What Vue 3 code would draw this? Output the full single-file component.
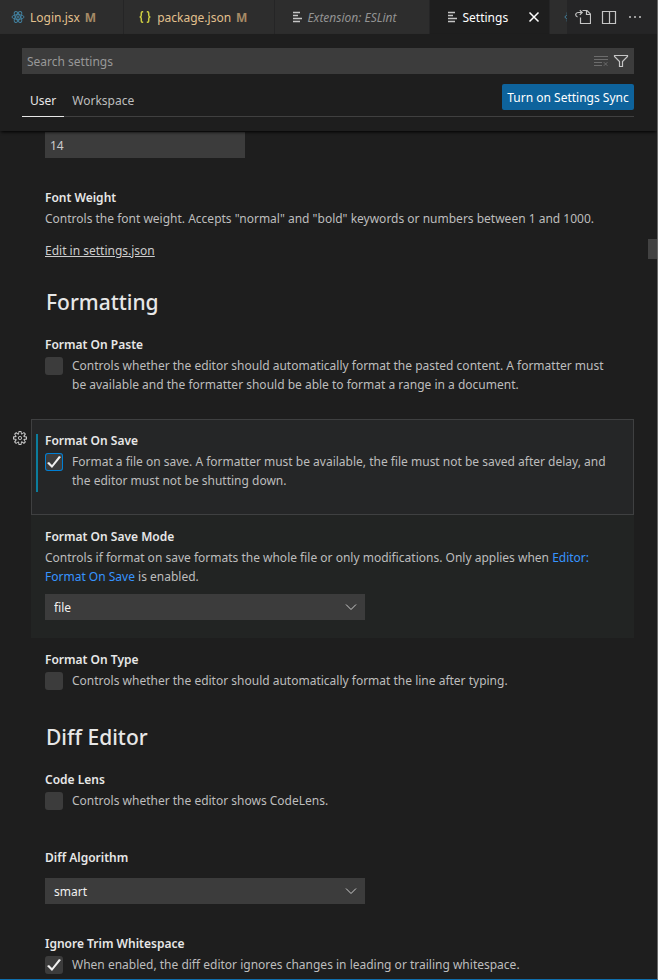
<script setup>
import { ref } from 'vue'

const tabs = [
  { name: 'Login.jsx', icon: 'react', modified: true },
  { name: 'package.json', icon: 'json', modified: true },
  { name: 'Extension: ESLint', icon: 'lines', preview: true },
  { name: 'Settings', icon: 'lines', active: true },
  { name: '', icon: 'react' },
]

const fontSize = ref('14')
const query = ref('')
const formatOnPaste = ref(false)
const formatOnSave = ref(true)
const saveMode = ref('file')
const formatOnType = ref(false)
const codeLens = ref(false)
const algorithm = ref('smart')
const ignoreTrim = ref(true)
</script>

<template>
  <div class="window">
    <header class="tabbar">
      <nav class="tabs" aria-label="Open editors">
        <a
          v-for="(tab, index) in tabs"
          :key="index"
          href="#"
          class="tab"
          :class="{ active: tab.active, preview: tab.preview, modified: tab.modified }"
        >
          <svg v-if="tab.icon === 'react'" class="icon react" viewBox="0 0 16 16" aria-hidden="true">
            <ellipse cx="8" cy="8" rx="6" ry="2.4" />
            <ellipse cx="8" cy="8" rx="6" ry="2.4" transform="rotate(60 8 8)" />
            <ellipse cx="8" cy="8" rx="6" ry="2.4" transform="rotate(120 8 8)" />
            <circle cx="8" cy="8" r="1" />
          </svg>
          <svg v-else-if="tab.icon === 'json'" class="icon json" viewBox="0 0 16 16" aria-hidden="true">
            <path d="M6.2 2.8H5.4Q4.3 2.8 4.3 4V6.3Q4.3 8 2.6 8Q4.3 8 4.3 9.7V12Q4.3 13.2 5.4 13.2H6.2" />
            <path d="M9.8 2.8H10.6Q11.7 2.8 11.7 4V6.3Q11.7 8 13.4 8Q11.7 8 11.7 9.7V12Q11.7 13.2 10.6 13.2H9.8" />
          </svg>
          <svg v-else class="icon lines" viewBox="0 0 16 16" aria-hidden="true">
            <path d="M3 3.5H10M3 6.5H8M3 9.5H12M3 12.5H10" />
          </svg>
          <span v-if="tab.name" class="tab-name">{{ tab.name }}</span>
          <span v-if="tab.modified" class="badge">M</span>
          <svg v-if="tab.active" class="icon close" viewBox="0 0 16 16" aria-hidden="true">
            <path d="M3.5 3.5L12.5 12.5M12.5 3.5L3.5 12.5" />
          </svg>
        </a>
      </nav>
      <div class="actions">
        <button type="button" aria-label="Open Settings (JSON)">
          <svg class="icon" viewBox="0 0 16 16" aria-hidden="true">
            <path d="M7.5 1.5H12L15.5 5V14.5H5.5V8.500" />
            <path d="M11.5 1.5V5.500H15.500" />
            <path d="M2.500 7.800Q.5 7.300 .7 5.500Q1 3.500 3.500 3.500H7M4.800 1.200L7.200 3.500L4.800 5.900" />
          </svg>
        </button>
        <button type="button" aria-label="Split editor">
          <svg class="icon" viewBox="0 0 16 16" aria-hidden="true">
            <path d="M1.5 2.5H14.5V14.5H1.5ZM8.5 2.5V14.5" />
          </svg>
        </button>
        <button type="button" aria-label="More actions">
          <svg class="icon dots" viewBox="0 0 16 16" aria-hidden="true">
            <circle cx="3" cy="8" r="1" /><circle cx="8" cy="8" r="1" /><circle cx="13" cy="8" r="1" />
          </svg>
        </button>
      </div>
    </header>

    <section class="settings-head">
      <div class="search">
        <input v-model="query" type="text" placeholder="Search settings" aria-label="Search settings" />
        <button type="button" class="dim" aria-label="Clear search">
          <svg class="icon" viewBox="0 0 16 16" aria-hidden="true">
            <path d="M1 3.5H15M1 6.5H15M1 9.5H9M1 12.5H9M10.800 9.200L14.400 12.800M14.400 9.200L10.800 12.800" />
          </svg>
        </button>
        <button type="button" aria-label="Filter settings">
          <svg class="icon funnel" viewBox="0 0 16 16" aria-hidden="true">
            <path d="M1.5 2.5H14.5V3.500L9.500 8.500V13.500H6.500V8.500L1.500 3.500Z" />
          </svg>
        </button>
      </div>
      <div class="scope">
        <a href="#" class="scope-tab current">User</a>
        <a href="#" class="scope-tab">Workspace</a>
        <button type="button" class="sync">Turn on Settings Sync</button>
      </div>
    </section>

    <main class="settings">
      <div class="item first">
        <input v-model="fontSize" class="number" type="text" aria-label="Font Size" />
      </div>

      <div class="item">
        <h3>Font Weight</h3>
        <p>Controls the font weight. Accepts "normal" and "bold" keywords or numbers between 1 and 1000.</p>
        <a href="#" class="edit">Edit in settings.json</a>
      </div>

      <h2>Formatting</h2>

      <div class="item">
        <h3>Format On Paste</h3>
        <label class="check">
          <input v-model="formatOnPaste" type="checkbox" />
          <span>Controls whether the editor should automatically format the pasted content. A formatter must be available and the formatter should be able to format a range in a document.</span>
        </label>
      </div>

      <div class="item focused">
        <button type="button" class="gear" aria-label="More actions for Format On Save">
          <svg class="icon" viewBox="0 0 16 16" aria-hidden="true">
            <path fill-rule="evenodd" d="M9.1 4.4L8.6 2H7.4l-.5 2.4-.7.3-2-1.3-.9.8 1.3 2-.2.7-2.4.5v1.2l2.4.5.3.8-1.3 2 .8.8 2-1.3.8.3.4 2.3h1.2l.5-2.4.8-.3 2 1.3.8-.8-1.3-2 .3-.8 2.3-.4V7.4l-2.4-.5-.3-.8 1.3-2-.8-.8-2 1.3-.7-.2zM9.4 1l.5 2.4L12 2.1l2 2-1.4 2.1 2.4.4v2.8l-2.4.5L14 12l-2 2-2.1-1.4-.5 2.4H6.6l-.5-2.4L4 13.9l-2-2 1.400-2.100L1 9.400V6.600l2.400-.5L2.100 4l2-2 2.100 1.400.4-2.400h2.800zm.6 7c0 1.100-.9 2-2 2s-2-.9-2-2 .9-2 2-2 2 .9 2 2zM8 9c.6 0 1-.4 1-1s-.4-1-1-1-1 .4-1 1 .4 1 1 1z" />
          </svg>
        </button>
        <h3>Format On Save</h3>
        <label class="check">
          <input v-model="formatOnSave" type="checkbox" />
          <span>Format a file on save. A formatter must be available, the file must not be saved after delay, and the editor must not be shutting down.</span>
        </label>
      </div>

      <div class="item hovered">
        <h3 id="save-mode">Format On Save Mode</h3>
        <p>Controls if format on save formats the whole file or only modifications. Only applies when <a href="#">Editor: Format On Save</a> is enabled.</p>
        <div class="select">
          <select v-model="saveMode" aria-labelledby="save-mode">
            <option>file</option>
            <option>modifications</option>
          </select>
          <svg class="icon" viewBox="0 0 16 16" aria-hidden="true"><path d="M3 5.500L8 10.500L13 5.500" /></svg>
        </div>
      </div>

      <div class="item">
        <h3>Format On Type</h3>
        <label class="check">
          <input v-model="formatOnType" type="checkbox" />
          <span>Controls whether the editor should automatically format the line after typing.</span>
        </label>
      </div>

      <h2>Diff Editor</h2>

      <div class="item">
        <h3>Code Lens</h3>
        <label class="check">
          <input v-model="codeLens" type="checkbox" />
          <span>Controls whether the editor shows CodeLens.</span>
        </label>
      </div>

      <div class="item bare">
        <h3 id="algorithm">Diff Algorithm</h3>
        <div class="select">
          <select v-model="algorithm" aria-labelledby="algorithm">
            <option>smart</option>
            <option>experimental</option>
          </select>
          <svg class="icon" viewBox="0 0 16 16" aria-hidden="true"><path d="M3 5.500L8 10.500L13 5.500" /></svg>
        </div>
      </div>

      <div class="item">
        <h3>Ignore Trim Whitespace</h3>
        <label class="check">
          <input v-model="ignoreTrim" type="checkbox" />
          <span>When enabled, the diff editor ignores changes in leading or trailing whitespace.</span>
        </label>
      </div>
      <div class="thumb"></div>
    </main>
  </div>
</template>

<style>
body {
  background: #1e1e1e;
}
</style>

<style scoped>
.window {
  box-sizing: border-box;
  display: flex;
  flex-direction: column;
  height: 100vh;
  overflow: hidden;
  border-right: 1px solid #6a6a6a;
  border-bottom: 1px solid #0f6fae;
  background: #1e1e1e;
  color: #bdbdbd;
  font: 12px/19px "Noto Sans", "Open Sans", sans-serif;
}
* {
  box-sizing: border-box;
}
button,
input,
select {
  margin: 0;
  padding: 0;
  border: 0;
  border-radius: 0;
  background: none;
  color: inherit;
  font: inherit;
  outline: none;
}
button {
  display: flex;
  align-items: center;
  justify-content: center;
}
a {
  color: inherit;
  text-decoration: none;
}
.icon {
  display: block;
  flex: none;
  width: 16px;
  height: 16px;
  fill: none;
  stroke: currentColor;
}

.tabbar {
  display: flex;
  flex: none;
  height: 34px;
  background: #252526;
}
.tabs {
  display: flex;
  flex: 1;
  min-width: 0;
  overflow: hidden;
}
.tab {
  display: flex;
  flex: none;
  align-items: center;
  padding: 0 27px 0 13px;
  border-right: 1px solid #252526;
  background: #2d2d2d;
  color: #939393;
  white-space: nowrap;
}
.tab:first-child {
  padding-left: 10px;
}
.tab-name {
  margin-left: 4px;
}
.badge {
  margin-left: 5px;
  color: #a58a66;
  font-weight: 700;
}
.modified {
  color: #e2c08d;
}
.preview {
  padding-right: 33px;
  padding-left: 15px;
  font-style: italic;
}
.preview .tab-name,
.active .tab-name {
  margin-left: 1px;
}
.active {
  padding-right: 7px;
  padding-left: 15px;
  background: #1e1e1e;
  color: #fff;
}
.close {
  margin-left: 18px;
  stroke-width: 1.5;
}
.react {
  color: #42809f;
}
.json {
  color: #cbcb41;
  stroke-width: 1.5;
}
.lines {
  color: #c5c5c5;
  stroke-width: 1.3;
}
.actions {
  display: flex;
  align-items: center;
  gap: 10px;
  padding: 0 14px 0 8px;
  color: #c5c5c5;
}
.actions .icon,
.funnel {
  stroke-width: 1.2;
}
.dots {
  fill: currentColor;
  stroke: none;
}

.settings-head {
  z-index: 1;
  flex: none;
  padding: 14px 23px 14px 22px;
  box-shadow: 0 2px 3px -1px #000;
}
.search {
  display: flex;
  align-items: center;
  gap: 4px;
  height: 26px;
  padding: 0 5px;
  background: #3c3c3c;
  color: #c5c5c5;
}
.search input {
  flex: 1;
  min-width: 0;
}
.search input::placeholder {
  color: #989898;
  opacity: 1;
}
.dim {
  color: #6c6c6c;
}
.scope {
  display: flex;
  align-items: flex-end;
  margin-top: 10px;
  border-bottom: 1px solid #404040;
}
.scope-tab {
  margin-bottom: -1px;
  padding: 0 8px 6px;
  border-bottom: 1px solid transparent;
}
.current {
  border-color: #e7e7e7;
  color: #e7e7e7;
}
.sync {
  min-width: 132px;
  height: 26px;
  margin: 0 0 6px auto;
  padding: 0 4px;
  border-radius: 2px;
  background: #0e639c;
  color: #fff;
  white-space: nowrap;
}

.settings {
  position: relative;
  flex: 1;
  min-height: 0;
  overflow: hidden;
  padding: 0 23px 0 31px;
}
.item {
  position: relative;
  padding: 12px 14px 25px;
}
.item.first {
  padding: 1px 14px 18px;
}
.number {
  display: block;
  width: 200px;
  height: 26px;
  padding: 0 5px;
  background: #3c3c3c;
  color: #ccc;
}
h2 {
  margin: 0;
  padding: 0 15px;
  color: #e7e7e7;
  font-size: 21px;
  font-weight: 500;
  line-height: 42px;
}
h3 {
  margin: 0 0 1px;
  color: #e7e7e7;
  font-size: 12px;
  font-weight: 600;
  line-height: 20px;
}
p {
  margin: 0;
}
p a {
  color: #3794ff;
}
.edit {
  display: block;
  width: fit-content;
  margin-top: 13px;
  margin-bottom: -4px;
  color: #ccc;
  text-decoration: underline;
}
.check {
  display: flex;
  align-items: flex-start;
  gap: 9px;
  min-height: 20px;
}
.check input {
  appearance: none;
  display: block;
  flex: none;
  width: 18px;
  height: 18px;
  margin: 1px 0;
  border-radius: 3px;
  background: #3c3c3c;
}
.check input:checked::before {
  content: "";
  display: block;
  width: 18px;
  height: 18px;
  background: #f0f0f0;
  clip-path: polygon(2px 10px, 4px 9px, 7px 12px, 14px 3px, 16px 4px, 7px 15px);
}
.focused {
  background: #252627;
  box-shadow: inset 0 0 0 1px #3f4041;
}
.focused::before {
  content: "";
  position: absolute;
  top: 15px;
  bottom: 23px;
  left: 5px;
  width: 2px;
  background: #0c7d9d;
}
.focused .check input {
  box-shadow: inset 0 0 0 1px #007fd4;
}
.gear {
  position: absolute;
  top: 11px;
  left: -19px;
  color: #c5c5c5;
}
.gear .icon {
  fill: currentColor;
  stroke: none;
}
.hovered {
  background: #222423;
}
.select {
  display: flex;
  align-items: center;
  max-width: 320px;
  margin: 8px 0 -7px;
  background: #3c3c3c;
  color: #f0f0f0;
}
.bare .select {
  margin-top: 10px;
}
.select select {
  appearance: none;
  flex: 1;
  height: 26px;
  margin-right: -22px;
  padding: 0 26px 0 9px;
}
.select .icon {
  margin-right: 6px;
  color: #ccc;
  pointer-events: none;
}
.thumb {
  position: absolute;
  top: 108px;
  right: 0;
  width: 9px;
  height: 20px;
  background: #424242;
}
</style>
